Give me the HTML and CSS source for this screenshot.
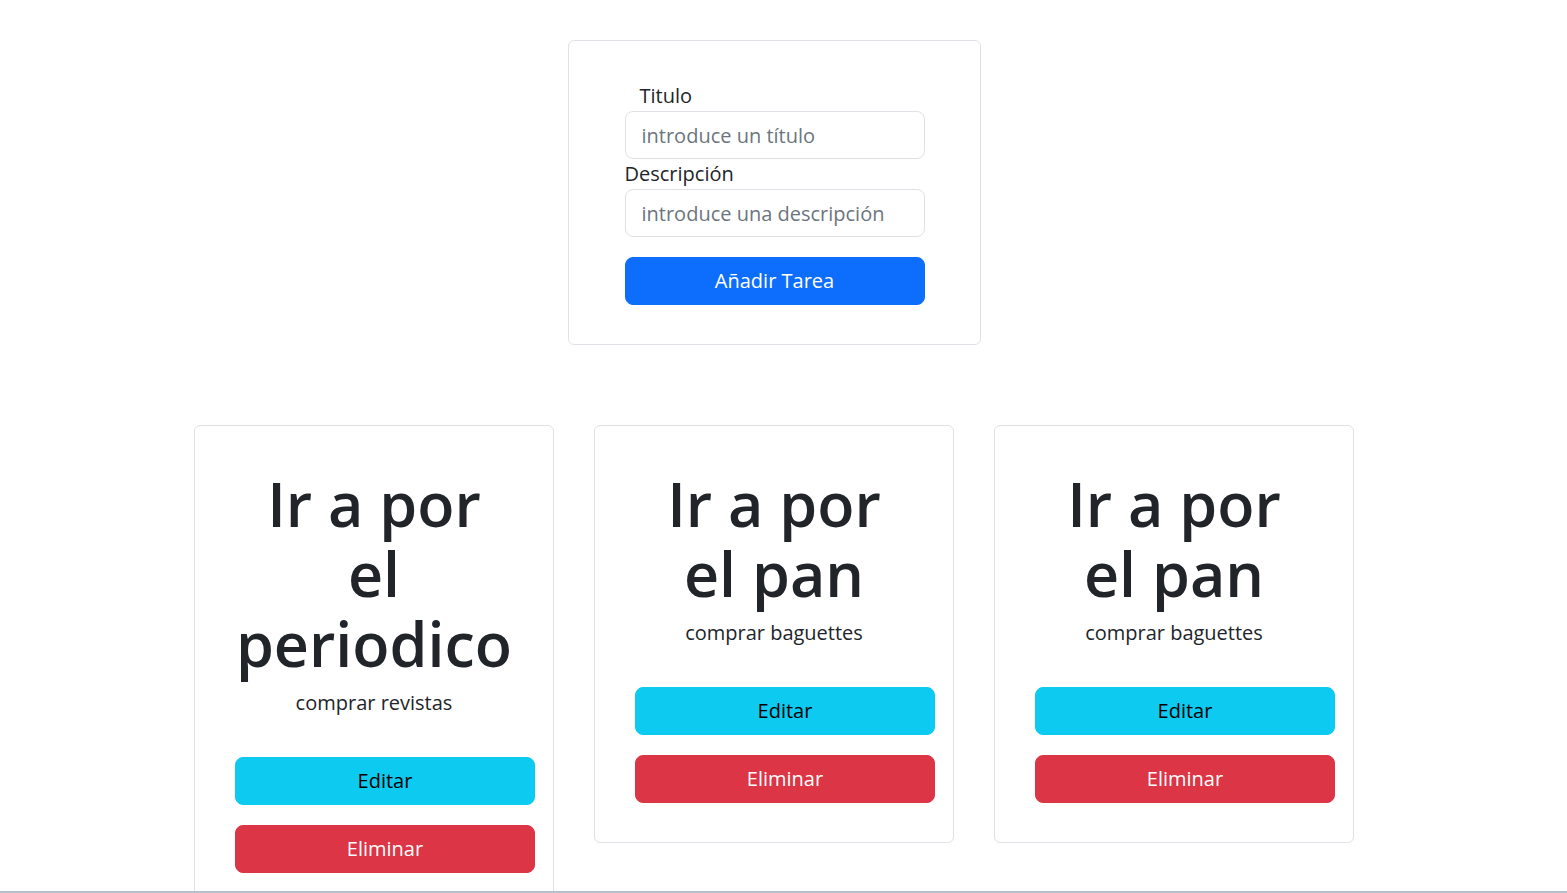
FILE: index.html
```html
<!DOCTYPE html>
<html lang="es">
<head>
<meta charset="utf-8">
<title>Tareas</title>
<link rel="stylesheet" href="styles.css">
</head>
<body>
<div class="page">
  <section class="form-card">
    <form class="task-form">
      <label class="field-label field-label--indent" for="titulo">Titulo</label>
      <input class="field-input" id="titulo" type="text" placeholder="introduce un título">
      <label class="field-label" for="descripcion">Descripción</label>
      <input class="field-input" id="descripcion" type="text" placeholder="introduce una descripción">
      <button class="btn btn-primary btn-add" type="button">Añadir Tarea</button>
    </form>
  </section>

  <section class="task-list">
    <article class="task-card">
      <h1 class="task-title">Ir a por el periodico</h1>
      <p class="task-desc">comprar revistas</p>
      <div class="task-actions">
        <button class="btn btn-info" type="button">Editar</button>
        <button class="btn btn-danger" type="button">Eliminar</button>
      </div>
    </article>
    <article class="task-card">
      <h1 class="task-title">Ir a por el pan</h1>
      <p class="task-desc">comprar baguettes</p>
      <div class="task-actions">
        <button class="btn btn-info" type="button">Editar</button>
        <button class="btn btn-danger" type="button">Eliminar</button>
      </div>
    </article>
    <article class="task-card">
      <h1 class="task-title">Ir a por el pan</h1>
      <p class="task-desc">comprar baguettes</p>
      <div class="task-actions">
        <button class="btn btn-info" type="button">Editar</button>
        <button class="btn btn-danger" type="button">Eliminar</button>
      </div>
    </article>
  </section>
</div>
<div class="window-edge"></div>
</body>
</html>
```

FILE: styles.css
```css
html {
  overflow: hidden;
}

* {
  box-sizing: border-box;
}

body {
  margin: 0;
  background: #fff;
  color: #212529;
  font-family: "Open Sans", "Noto Sans", "Liberation Sans", sans-serif;
  font-size: 20px;
  line-height: 30px;
}

.page {
  padding: 40px 19px 0 0;
  display: flex;
  flex-direction: column;
  align-items: center;
  gap: 80px;
}

.form-card {
  width: 413px;
  border: 1px solid #dee2e6;
  border-radius: 6px;
  padding: 40px 56px 39px;
}

.task-form {
  width: 300px;
  margin: 0 auto;
  display: flex;
  flex-direction: column;
}

.field-label {
  display: block;
  font-size: 20px;
  line-height: 30px;
  color: #212529;
}

.field-label--indent {
  padding-left: 15px;
}

.field-input {
  display: block;
  width: 300px;
  height: 48px;
  padding: 8px 16px;
  font-family: inherit;
  font-size: 20px;
  line-height: 30px;
  color: #212529;
  border: 1px solid #dee2e6;
  border-radius: 8px;
  background: #fff;
  outline: none;
}

.field-input::placeholder {
  color: #6c757d;
  opacity: 1;
}

.btn {
  display: block;
  width: 300px;
  height: 48px;
  padding: 0 16px;
  border: 1px solid transparent;
  border-radius: 8px;
  font-family: inherit;
  font-size: 20px;
  line-height: 30px;
  text-align: center;
  cursor: pointer;
}

.btn-add {
  margin-top: 20px;
}

.btn-primary {
  background: #0d6efd;
  border-color: #0d6efd;
  color: #fff;
}

.btn-info {
  background: #0dcaf0;
  border-color: #0dcaf0;
  color: #000;
}

.btn-danger {
  background: #dc3545;
  border-color: #dc3545;
  color: #fff;
}

.task-list {
  display: flex;
  align-items: flex-start;
  gap: 40px;
}

.task-card {
  width: 360px;
  border: 1px solid #dee2e6;
  border-radius: 6px;
  padding: 40px 40px 39px;
}

.task-title {
  margin: 0 0 9px;
  padding-top: 3px;
  font-size: 61px;
  line-height: 70px;
  font-weight: 600;
  text-align: center;
  color: #212529;
}

.task-desc {
  margin: 0 0 39px;
  text-align: center;
  font-size: 20px;
  line-height: 30px;
}

.task-actions {
  display: flex;
  flex-direction: column;
  gap: 20px;
}

.window-edge {
  position: fixed;
  left: 0;
  right: 0;
  bottom: 0;
  height: 2px;
  background: #b6c0cc;
}
```
